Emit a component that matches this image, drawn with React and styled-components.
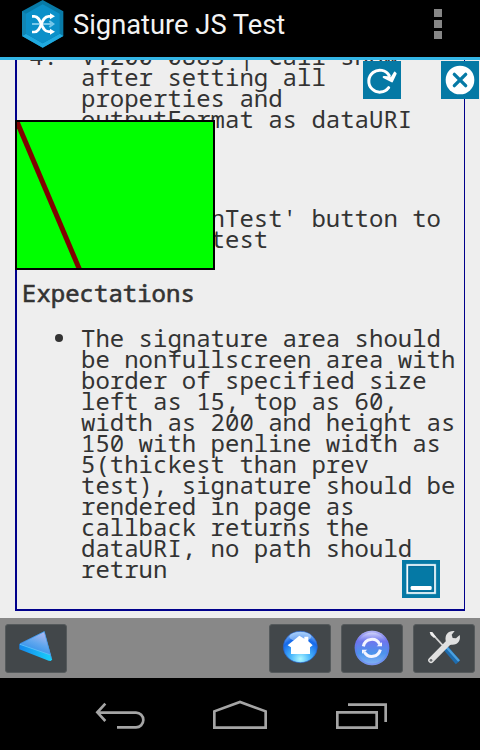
import React from "react";
import styled, { createGlobalStyle } from "styled-components";

const GlobalStyle = createGlobalStyle`
  * { box-sizing: border-box; }
  body { margin: 0; background: #000; }
`;

const Screen = styled.div`
  width: 480px;
  height: 750px;
  display: flex;
  flex-direction: column;
  overflow: hidden;
  background: #000;
`;

const ActionBar = styled.header`
  height: 60px;
  flex: none;
  display: flex;
  align-items: flex-start;
  background: #000;
  border-bottom: 3px solid #33b5e5;
  padding-left: 21px;
`;

const Logo = styled.svg`
  width: 44px;
  height: 48px;
  flex: none;
`;

const Title = styled.h1`
  margin: 0 0 0 8px;
  flex: 1;
  font: 400 27.3px/50px Roboto, sans-serif;
  color: #f3f3f3;
  white-space: nowrap;
`;

const Overflow = styled.div`
  display: flex;
  flex-direction: column;
  gap: 3px;
  padding: 9px 38px 0 0;
`;

const Dot = styled.i`
  width: 8px;
  height: 8px;
  background: #868686;
`;

const WebView = styled.main`
  position: relative;
  height: 558px;
  flex: none;
  overflow: hidden;
  background: #eee;
  padding: 0 15px 7px;
`;

const Frame = styled.section`
  display: flow-root;
  height: 551px;
  border: 2px solid #00008b;
  border-top: 0;
  border-right-width: 1px;
  padding-left: 5px;
  color: #333;
  font: 24px/21px "Noto Sans Mono", "DejaVu Sans Mono", monospace;
  white-space: pre;
`;

const Entry = styled.div`
  display: grid;
  grid-template-columns: 36px auto;
  column-gap: 23px;
  margin-top: ${(p) => p.$top}px;
`;

const Marker = styled.span`
  text-align: right;
`;

const Bullet = styled.span`
  width: 8px;
  height: 8px;
  margin: 7px 0 0 33px;
  border-radius: 50%;
  background: #333;
`;

const Heading = styled.h2`
  margin: 33px 0 0;
  font: inherit;
  font-weight: 400;
  -webkit-text-stroke: 0.6px #333;
`;

const Canvas = styled.svg`
  position: absolute;
  left: 15px;
  top: 60px;
  width: 200px;
  height: 150px;
  background: #0f0;
  border: 2px solid #000;
`;

const FloatButton = styled.button`
  position: absolute;
  left: ${(p) => p.$x}px;
  top: ${(p) => p.$y}px;
  width: 38px;
  height: 38px;
  padding: 0;
  border: 0;
  background: #0579a5;
  svg { display: block; width: 38px; height: 38px; }
`;

const ToolBar = styled.footer`
  height: 60px;
  flex: none;
  display: flex;
  gap: 10px;
  padding: 6px 5px 0;
  background: #888;
`;

const ToolButton = styled.button`
  width: 62px;
  height: 49px;
  padding: 0;
  margin-right: ${(p) => (p.$first ? "auto" : "0")};
  border: 1px solid #555a5c;
  border-radius: 3px;
  background: #42474a;
  svg { display: block; width: 62px; height: 49px; margin: -1px; }
`;

const NavBar = styled.nav`
  height: 72px;
  flex: none;
  display: flex;
  gap: 65px;
  padding: 22px 0 0 92px;
`;

const NavIcon = styled.svg`
  width: 56px;
  height: 32px;
  fill: none;
  stroke: #a5a5a5;
  stroke-width: 8;
`;

const STEP_ONE = `VT200-0885 | Call show
after setting all
properties and
outputFormat as dataURI`;

const STEP_TWO = `Click 'RunTest' button to
run this test`;

const EXPECTED = `The signature area should
be nonfullscreen area with
border of specified size
left as 15, top as 60,
width as 200 and height as
150 with penline width as
5(thickest than prev
test), signature should be
rendered in page as
callback returns the
dataURI, no path should
retrun`;

export default function App() {
  return (
    <Screen>
      <GlobalStyle />
      <ActionBar>
        <Logo viewBox="63 0 132 144">
          <path fill="#087aa7" d="M128 0 190 34V108L128 143 66 108V34Z" />
          <path fill="#20a9df" d="M66 108 78 101 128 130 179 101 190 108 128 143Z" />
          <path fill="#1186b4" d="M66 34 78 41V101L66 108Z" />
          <path fill="#0b90c9" d="M128 13 179 41V101L128 130 78 101V41Z" />
          <g fill="none" stroke="#78c8ea" strokeWidth="6">
            <path d="M96 72H154M148 63 160 72 148 81" />
          </g>
          <g fill="none" stroke="#fff" strokeWidth="8">
            <path d="M96 49H103C126 49 121 95 146 95H155M96 96H103C126 96 121 49 146 49H155" />
          </g>
          <path fill="#fff" d="M150 40 165 49 150 58ZM150 86 165 95 150 104Z" />
        </Logo>
        <Title>Signature JS Test</Title>
        <Overflow><Dot /><Dot /><Dot /></Overflow>
      </ActionBar>

      <WebView>
        <Frame>
          <Entry $top={-15}><Marker>4.</Marker><span>{STEP_ONE}</span></Entry>
          <Entry $top={78}><Marker>5.</Marker><span>{STEP_TWO}</span></Entry>
          <Heading>Expectations</Heading>
          <Entry $top={24}><Bullet /><span>{EXPECTED}</span></Entry>
        </Frame>
        <Canvas viewBox="0 0 196 146">
          <path d="M-2 -5 64 151" stroke="#800000" strokeWidth="5" />
        </Canvas>
        <FloatButton $x={363} $y={1} aria-label="Clear">
          <svg viewBox="429 33 114 114" fill="none" stroke="#fff">
            <path strokeWidth="9" strokeLinecap="round" d="M506 113A33 33 0 1 1 508 77" />
            <path fill="#fff" strokeWidth="6" strokeLinejoin="round" d="M491 81 507 82 513 86 524 68 527 71 516 94Z" />
          </svg>
        </FloatButton>
        <FloatButton $x={441} $y={1} aria-label="Close">
          <svg viewBox="663 33 114 114">
            <circle cx="720" cy="90" r="43" fill="#fff" />
            <path stroke="#0579a5" strokeWidth="10" strokeLinecap="round" d="M703 73 737 107M737 73 703 107" />
          </svg>
        </FloatButton>
        <FloatButton $x={402} $y={500} aria-label="Capture">
          <svg viewBox="66 60 114 114">
            <rect x="82" y="75" width="83" height="84" fill="#0579a5" stroke="#8fc5dc" strokeWidth="7" />
            <rect x="82" y="75" width="83" height="84" fill="none" stroke="#fff" strokeWidth="3.5" />
            <rect x="87" y="80" width="73" height="74" fill="none" stroke="#056995" strokeWidth="3" />
            <rect x="92" y="138" width="63" height="12" rx="4" fill="#fff" />
          </svg>
        </FloatButton>
      </WebView>

      <ToolBar>
        <ToolButton $first aria-label="Back">
          <svg viewBox="15 27 186 147">
            <defs>
              <linearGradient id="face" x1="0.8" y1="0" x2="0.3" y2="1">
                <stop offset="0" stopColor="#b6baf0" />
                <stop offset="0.5" stopColor="#5fa6ee" />
                <stop offset="1" stopColor="#2589e8" />
              </linearGradient>
              <linearGradient id="edge" x1="0" x2="1">
                <stop offset="0" stopColor="#1687ec" />
                <stop offset="1" stopColor="#19d2fb" />
              </linearGradient>
            </defs>
            <path fill="url(#edge)" d="M58 87 133 49 156 133 153 138 146 137 58 103Z" />
            <path fill="url(#face)" d="M60 87 133 50 152 120Z" />
            <path fill="none" stroke="#5bbcf8" strokeWidth="3" d="M60 88 152 120" />
            <path fill="none" stroke="#4a8fe6" strokeWidth="2" d="M60 86 133 50 154 130" />
          </svg>
        </ToolButton>
        <ToolButton aria-label="Home">
          <svg viewBox="27 27 186 147">
            <defs>
              <radialGradient id="orb" cx="0.5" cy="0.88" r="0.85">
                <stop offset="0" stopColor="#aef8ff" />
                <stop offset="0.35" stopColor="#47b5fc" />
                <stop offset="0.75" stopColor="#1669ea" />
                <stop offset="1" stopColor="#7fb6f5" />
              </radialGradient>
            </defs>
            <ellipse cx="121" cy="96" rx="51" ry="47" fill="url(#orb)" stroke="#2860c7" strokeWidth="2" />
            <ellipse cx="121" cy="65" rx="33" ry="14" fill="#d6ecff" opacity="0.45" />
            <path fill="#fff" d="M83 91 118 62 133 71V65H145V79L158 91 150 97V117H93V97Z" />
          </svg>
        </ToolButton>
        <ToolButton aria-label="Refresh">
          <svg viewBox="243 27 186 147">
            <defs>
              <linearGradient id="violet" x1="0" y1="0" x2="0" y2="1">
                <stop offset="0" stopColor="#e4e5fc" />
                <stop offset="0.3" stopColor="#6f76ee" />
                <stop offset="0.65" stopColor="#4b93ec" />
                <stop offset="1" stopColor="#88b5f5" />
              </linearGradient>
            </defs>
            <circle cx="336" cy="99" r="52" fill="url(#violet)" />
            <circle cx="336" cy="99" r="49" fill="none" stroke="#6a6bea" strokeWidth="5" opacity="0.4" />
            <path fill="none" stroke="#f4f5ff" strokeWidth="9" d="M310 94A26 26 0 0 1 359 88M361 104A26 26 0 0 1 313 111" />
            <path fill="#f4f5ff" d="M350 94H366V82ZM306 104H322L306 116Z" />
          </svg>
        </ToolButton>
        <ToolButton aria-label="Settings">
          <svg viewBox="459 27 186 147">
            <path stroke="#d6d6d6" strokeWidth="5" d="M516 56 560 104" />
            <path fill="#eee" d="M509 51 517 51 528 66 521 68 512 60Z" />
            <path stroke="#1e6cae" strokeWidth="17" d="M557 99 594 142" />
            <path stroke="#4aa0df" strokeWidth="7" d="M559 96 597 138" />
            <path stroke="#e0e0e0" strokeWidth="17" strokeLinecap="round" d="M513 136 570 78" />
            <path fill="#e0e0e0" d="M557 77C554 58 565 46 584 48L575 59 578 69 588 70 599 60C603 76 594 91 573 89L563 91Z" />
            <circle cx="513" cy="136" r="4" fill="#666a6c" />
          </svg>
        </ToolButton>
      </ToolBar>

      <NavBar>
        <NavIcon viewBox="66 60 168 96">
          <path d="M106 71 82 97 106 123M82 98H198A22 22 0 0 1 198 142H141" />
        </NavIcon>
        <NavIcon viewBox="429 60 168 96">
          <path d="M433 143V94L510 66 587 94V143Z" />
        </NavIcon>
        <NavIcon viewBox="792 60 168 96">
          <path d="M802 97H920V143H802ZM834 74H947V126" />
        </NavIcon>
      </NavBar>
    </Screen>
  );
}
